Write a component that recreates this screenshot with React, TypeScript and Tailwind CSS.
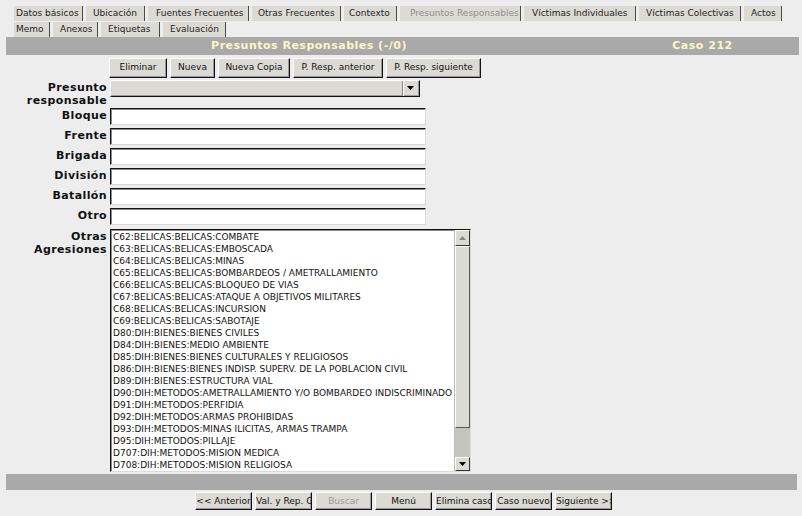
import React from "react";

const row1: { t: string; w: number; pl: number; off?: boolean }[] = [
  { t: "Datos básicos", w: 69, pl: 2 },
  { t: "Ubicación", w: 59, pl: 7 },
  { t: "Fuentes Frecuentes", w: 101, pl: 8 },
  { t: "Otras Frecuentes", w: 89, pl: 6 },
  { t: "Contexto", w: 53, pl: 5 },
  { t: "Presuntos Responsables", w: 121, pl: 10, off: true },
  { t: "Víctimas Individuales", w: 112, pl: 8 },
  { t: "Víctimas Colectivas", w: 102, pl: 7 },
  { t: "Actos", w: 38, pl: 7 },
];
const row2 = [
  { t: "Memo", w: 36, pl: 2 },
  { t: "Anexos", w: 45, pl: 7 },
  { t: "Etiquetas", w: 59, pl: 7 },
  { t: "Evaluación", w: 63, pl: 7 },
];

const items = [
  "C62:BELICAS:BELICAS:COMBATE",
  "C63:BELICAS:BELICAS:EMBOSCADA",
  "C64:BELICAS:BELICAS:MINAS",
  "C65:BELICAS:BELICAS:BOMBARDEOS / AMETRALLAMIENTO",
  "C66:BELICAS:BELICAS:BLOQUEO DE VIAS",
  "C67:BELICAS:BELICAS:ATAQUE A OBJETIVOS MILITARES",
  "C68:BELICAS:BELICAS:INCURSION",
  "C69:BELICAS:BELICAS:SABOTAJE",
  "D80:DIH:BIENES:BIENES CIVILES",
  "D84:DIH:BIENES:MEDIO AMBIENTE",
  "D85:DIH:BIENES:BIENES CULTURALES Y RELIGIOSOS",
  "D86:DIH:BIENES:BIENES INDISP. SUPERV. DE LA POBLACION CIVIL",
  "D89:DIH:BIENES:ESTRUCTURA VIAL",
  "D90:DIH:METODOS:AMETRALLAMIENTO Y/O BOMBARDEO INDISCRIMINADO",
  "D91:DIH:METODOS:PERFIDIA",
  "D92:DIH:METODOS:ARMAS PROHIBIDAS",
  "D93:DIH:METODOS:MINAS ILICITAS, ARMAS TRAMPA",
  "D95:DIH:METODOS:PILLAJE",
  "D707:DIH:METODOS:MISION MEDICA",
  "D708:DIH:METODOS:MISION RELIGIOSA",
];

const topButtons = [
  { t: "Eliminar", w: 58 },
  { t: "Nueva", w: 45 },
  { t: "Nueva Copia", w: 72 },
  { t: "P. Resp. anterior", w: 90 },
  { t: "P. Resp. siguiente", w: 95 },
];

const bottomButtons = [
  { t: "<< Anterior" },
  { t: "Val. y Rep. Gral." },
  { t: "Buscar", off: true },
  { t: "Menú" },
  { t: "Elimina caso" },
  { t: "Caso nuevo" },
  { t: "Siguiente >>" },
];

function Tab({ t, w, pl, off }: { t: string; w: number; pl: number; off?: boolean }) {
  return (
    <div
      className={`h-[15px] bg-[#dcdad5] border-r border-[#4a4a4a] flex items-center whitespace-nowrap overflow-hidden ${off ? "text-[#8e8e8e]" : "text-[#1e1e1e]"}`}
      style={{ width: w, paddingLeft: pl }}
    >
      {t}
    </div>
  );
}

function TextInput() {
  return (
    <div className="w-[316px] h-[17px] bg-white border-t border-l border-[#111] border-b border-r border-b-[#dadada] border-r-[#dadada] shadow-[inset_1px_1px_0_#8a8a8a]" />
  );
}

function Label({ children }: { children: React.ReactNode }) {
  return (
    <div className="text-right font-bold text-[11px] leading-[13px] tracking-[0.4px] text-[#111] pt-[1px]">
      {children}
    </div>
  );
}

export default function App() {
  return (
    <div className="w-[802px] h-[516px] bg-[#ededed] overflow-hidden font-['DejaVu_Sans',sans-serif] text-[9px] text-[#111]">
      {/* tabs */}
      <div className="pt-[6px] pl-[14px] flex flex-col gap-[1px]">
        <div className="flex gap-[3px]">
          {row1.map((x) => (
            <Tab key={x.t} {...x} />
          ))}
        </div>
        <div className="flex gap-[3px]">
          {row2.map((x) => (
            <Tab key={x.t} {...x} />
          ))}
        </div>
      </div>

      {/* header */}
      <div className="ml-[6px] w-[793px] h-[18px] bg-[#a9a9a9] flex items-center font-bold text-[11px] tracking-[0.5px] text-[#fbf7c2]">
        <div className="w-[606px] text-center">Presuntos Responsables (-/0)</div>
        <div className="flex-1 text-center pr-[6px]">Caso 212</div>
      </div>

      {/* action buttons */}
      <div className="mt-[3px] pl-[109px] flex gap-[3px]">
        {topButtons.map((b) => (
          <div
            key={b.t}
            className="h-[20px] bg-[#dcdad5] border-t border-l border-white border-b border-r border-b-[#111] border-r-[#111] shadow-[inset_-1px_-1px_0_#9a9a9a] flex items-center justify-center whitespace-nowrap"
            style={{ width: b.w }}
          >
            {b.t}
          </div>
        ))}
      </div>

      {/* form */}
      <div className="mt-[2px] grid grid-cols-[107px_auto] gap-x-[3px]">
        <Label>
          Presunto
          <br />
          responsable
        </Label>
        <div className="h-[28px]">
          <div className="w-[310px] h-[17px] bg-[#dcdad5] border-t border-l border-white border-b border-r border-b-[#111] border-r-[#111] shadow-[inset_-1px_-1px_0_#9a9a9a] flex justify-end">
            <div className="w-[17px] h-full border-l border-[#8a8a8a] shadow-[inset_1px_0_0_#fff] flex items-center justify-center">
              <svg width="8" height="5" viewBox="0 0 8 5">
                <path d="M0 0h7L3.5 4z" fill="#000" />
              </svg>
            </div>
          </div>
        </div>

        {["Bloque", "Frente", "Brigada", "División", "Batallón", "Otro"].map((l) => (
          <React.Fragment key={l}>
            <Label>{l}</Label>
            <div className="h-[20px]">
              <TextInput />
            </div>
          </React.Fragment>
        ))}

        <div className="mt-[1px]">
          <Label>
            Otras
            <br />
            Agresiones
          </Label>
        </div>
        <div className="mt-[1px] w-[361px] h-[243px] bg-white border-t border-l border-[#111] border-b border-r border-b-[#dadada] border-r-[#dadada] shadow-[inset_1px_1px_0_#8a8a8a] flex">
          <div className="flex-1 overflow-hidden pl-[2px] pt-[1px]">
            {items.map((it) => (
              <div key={it} className="h-[12px] leading-[12px] whitespace-nowrap text-[#111]">
                {it}
              </div>
            ))}
          </div>
          <div className="w-[16px] h-full flex flex-col bg-[#c4c4c0] border-l border-[#bdbdbd]">
            <div className="h-[16px] bg-[#dcdad5] border-t border-l border-white border-b border-r border-b-[#333] border-r-[#333] flex items-center justify-center">
              <svg width="7" height="4" viewBox="0 0 7 4">
                <path d="M0 4h7L3.5 0z" fill="#8a8a8a" />
              </svg>
            </div>
            <div className="h-[182px] bg-[#dcdad5] border-t border-l border-white border-b border-r border-b-[#555] border-r-[#555]" />
            <div className="flex-1" />
            <div className="h-[14px] bg-[#dcdad5] border-t border-l border-white border-b border-r border-b-[#333] border-r-[#333] flex items-center justify-center">
              <svg width="7" height="4" viewBox="0 0 7 4">
                <path d="M0 0h7L3.5 4z" fill="#000" />
              </svg>
            </div>
          </div>
        </div>
      </div>

      {/* bottom bar */}
      <div className="mt-[2px] ml-[6px] w-[791px] h-[16px] bg-[#a9a9a9]" />

      {/* bottom buttons */}
      <div className="mt-[2px] ml-[195px] flex gap-[3px]">
        {bottomButtons.map((b) => (
          <div
            key={b.t}
            className={`w-[57px] h-[18px] bg-[#dcdad5] border-t border-l border-white border-b border-r border-b-[#111] border-r-[#111] shadow-[inset_-1px_-1px_0_#9a9a9a] overflow-hidden whitespace-nowrap text-center leading-[16px] ${b.off ? "text-[#9a9a9a]" : "text-[#111]"}`}
          >
            {b.t}
          </div>
        ))}
      </div>
    </div>
  );
}
